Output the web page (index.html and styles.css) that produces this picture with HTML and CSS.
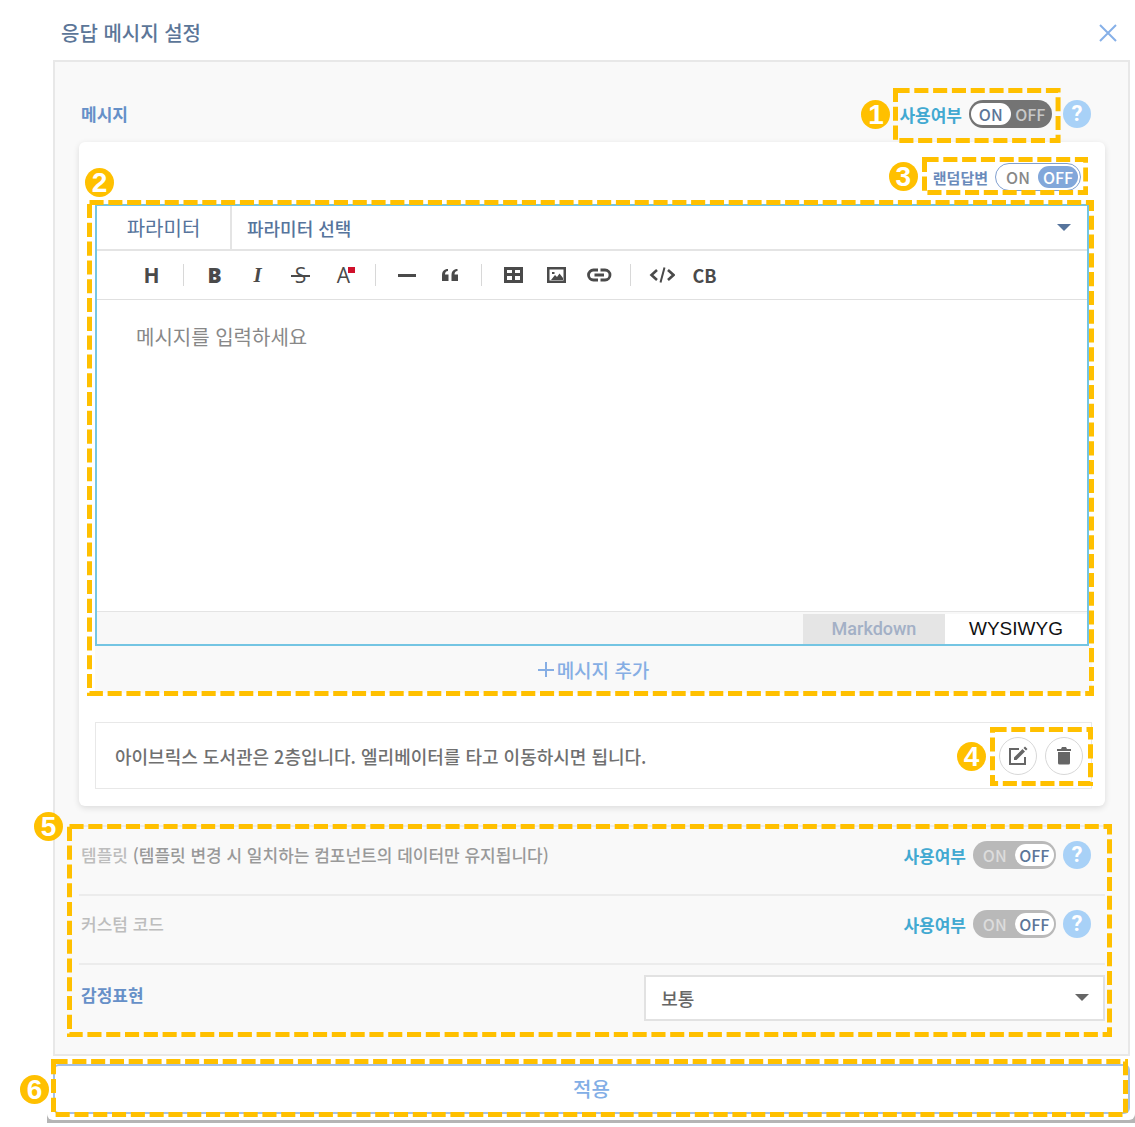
FILE: index.html
```html
<!DOCTYPE html>
<html lang="ko">
<head>
<meta charset="utf-8">
<title>응답 메시지 설정</title>
<meta name="viewport" content="width=device-width, initial-scale=1">
<link rel="stylesheet" href="styles.css">
</head>
<body>
<div class="backdrop">
<main class="dialog">
  <header class="dialog-head">
    <h1>응답 메시지 설정</h1>
    <button class="close" type="button" aria-label="닫기">
      <svg width="18" height="18" viewBox="0 0 18 18"><path d="M1 1l16 16M17 1L1 17" fill="none" stroke="currentColor" stroke-width="2"/></svg>
    </button>
  </header>

  <div class="panel">
    <section class="section-head">
      <h2>메시지</h2>
      <div class="controls wide">
        <div class="anchor">
          <label class="switch dark"><span class="switch-name">사용여부</span><input type="checkbox" checked><span class="track"><span class="on">ON</span><span class="off">OFF</span></span></label>
          <div class="mark mark-1"><svg><rect/></svg><b class="badge">1</b></div>
        </div>
        <button class="help" type="button">?</button>
      </div>
    </section>

    <section class="card">
      <div class="random-row">
        <div class="anchor">
          <label class="switch blue"><span class="switch-name">랜덤답변</span><input type="checkbox"><span class="track"><span class="on">ON</span><span class="off">OFF</span></span></label>
          <div class="mark mark-3"><svg><rect/></svg><b class="badge">3</b></div>
        </div>
      </div>

      <div class="anchor">
        <div class="editor">
          <div class="param-row">
            <label class="param-name" for="param">파라미터</label>
            <div class="select navy">
              <select id="param"><option>파라미터 선택</option></select>
            </div>
          </div>
          <div class="toolbar">
            <button type="button" class="t-bold">H</button>
            <span class="sep"></span>
            <button type="button" class="t-black">B</button>
            <button type="button" class="t-italic">I</button>
            <button type="button" class="t-strike">S</button>
            <button type="button" class="t-color">A</button>
            <span class="sep"></span>
            <button type="button" aria-label="구분선"><svg width="20" height="20" viewBox="0 0 20 20"><path d="M1 9h18v3H1z"/></svg></button>
            <button type="button" aria-label="인용"><svg width="18" height="20" viewBox="0 0 18 20"><path d="M7 4v2C5 6 4 7.500 4 9.500h3.500V16H1v-6C1 6.500 3 4 7 4zM16.500 4v2c-2 0-3 1.500-3 3.500H17V16h-6.500v-6c0-3.500 2-6 6-6z"/></svg></button>
            <span class="sep"></span>
            <button type="button" aria-label="표"><svg width="20" height="20" viewBox="0 0 20 20"><path fill-rule="evenodd" d="M1 2h19v16H1zM4 5v3h5V5zM12 5v3h5V5zM4 11v4h5v-4zM12 11v4h5v-4z"/></svg></button>
            <button type="button" aria-label="이미지"><svg width="20" height="20" viewBox="0 0 20 20"><path fill-rule="evenodd" d="M1 2h19v16H1zM3.500 4.500v11h14v-11zM5 15l4-5 2 2 2.500-3.500L17 13v2zM6 7h2.500v2H6z"/></svg></button>
            <button type="button" aria-label="링크"><svg width="26" height="20" viewBox="0 0 26 20"><path d="M12 5H7.500a5 5 0 0 0 0 10H12M14.500 5H19a5 5 0 0 1 0 10h-4.500M8.500 10H18" fill="none" stroke="currentColor" stroke-width="2.800"/></svg></button>
            <span class="sep"></span>
            <button type="button" aria-label="코드"><svg width="26" height="20" viewBox="0 0 26 20"><path d="M8 5l-5.500 5L8 15M19 5l5.500 5-5.500 5" fill="none" stroke="currentColor" stroke-width="2.600"/><path d="M15.500 2.500l-4 15" stroke="currentColor" stroke-width="2"/></svg></button>
            <button type="button" class="t-cb">CB</button>
          </div>
          <textarea aria-label="메시지" placeholder="메시지를 입력하세요"></textarea>
          <div class="modes">
            <button type="button" class="mode-md">Markdown</button>
            <button type="button" class="mode-wy">WYSIWYG</button>
          </div>
        </div>
        <button class="add" type="button">
          <svg width="16" height="16" viewBox="0 0 16 16"><path d="M8 0v15M0 8h16" fill="none" stroke="currentColor" stroke-width="2"/></svg>메시지 추가
        </button>
        <div class="mark mark-2"><svg><rect/></svg><b class="badge">2</b></div>
      </div>

      <div class="item">
        <p>아이브릭스 도서관은 2층입니다. 엘리베이터를 타고 이동하시면 됩니다.</p>
        <div class="anchor item-actions">
          <button class="round" type="button" aria-label="수정"><svg width="20" height="20" viewBox="0 0 20 20"><path d="M11 3H2v15h15v-7" fill="none" stroke="currentColor" stroke-width="2"/><path d="M6 11.500L14.500 3l2.500 2.500L8.500 14H6zM15.500 2L17 .5 19.500 3 18 4.500z"/></svg></button>
          <button class="round" type="button" aria-label="삭제"><svg width="20" height="20" viewBox="0 0 20 20"><path d="M3 3h4l1-2h4l1 2h4v2H3zM4 6h12v11a1.500 1.500 0 0 1-1.500 1.500h-9A1.500 1.500 0 0 1 4 17z"/></svg></button>
          <div class="mark mark-4"><svg><rect/></svg><b class="badge">4</b></div>
        </div>
      </div>
    </section>

    <div class="anchor rows">
      <section class="row">
        <h2 class="off-title">템플릿 <span>(템플릿 변경 시 일치하는 컴포넌트의 데이터만 유지됩니다)</span></h2>
        <div class="controls">
          <label class="switch gray"><span class="switch-name">사용여부</span><input type="checkbox"><span class="track"><span class="on">ON</span><span class="off">OFF</span></span></label>
          <button class="help" type="button">?</button>
        </div>
      </section>
      <section class="row">
        <h2 class="off-title">커스텀 코드</h2>
        <div class="controls">
          <label class="switch gray"><span class="switch-name">사용여부</span><input type="checkbox"><span class="track"><span class="on">ON</span><span class="off">OFF</span></span></label>
          <button class="help" type="button">?</button>
        </div>
      </section>
      <section class="row emotion">
        <h2><label for="emotion">감정표현</label></h2>
        <div class="select boxed">
          <select id="emotion"><option>보통</option></select>
        </div>
      </section>
      <div class="mark mark-5"><svg><rect/></svg><b class="badge">5</b></div>
    </div>
  </div>

  <footer class="anchor">
    <button class="apply" type="button">적용</button>
    <div class="mark mark-6"><svg><rect/></svg><b class="badge">6</b></div>
  </footer>
</main>
</div>
</body>
</html>
```
FILE: styles.css
```css
* { box-sizing: border-box; }

body {
  margin: 0;
  background: #fff;
  color: #666;
  font-family: "Noto Sans CJK KR", "Noto Sans", sans-serif;
  font-size: 17px;
  line-height: 28px;
}

h1, h2, p { margin: 0; }

button, select, textarea {
  margin: 0;
  padding: 0;
  border: 0;
  border-radius: 0;
  background: none;
  color: inherit;
  font: inherit;
}

svg { display: block; fill: currentColor; }

.backdrop {
  margin-left: 47px;
  padding-bottom: 3px;
  background: #b5b5b5;
}

.dialog {
  padding: 0 5px 6px 6px;
  border-radius: 0 0 6px 6px;
  background: #fff;
}

.dialog-head {
  display: flex;
  align-items: center;
  justify-content: space-between;
  height: 60px;
  padding: 6px 13px 0 8px;
}

h1 {
  color: #5c7698;
  font-size: 20px;
  font-weight: 500;
}

.close { color: #86b0e8; }

.panel {
  padding: 38px 23px 0 24px;
  border: 2px solid #e8e8e8;
  background: #f9f9f9;
}

h2 {
  color: #6690c8;
  font-size: 17px;
  font-weight: 700;
}

.section-head,
.row {
  display: flex;
  justify-content: space-between;
  padding: 0 14px 0 2px;
}

.section-head { margin-bottom: 14px; }

.controls {
  display: flex;
  align-items: flex-start;
  gap: 7px;
}

.controls.wide { gap: 11px; }

.help {
  width: 28px;
  height: 28px;
  border-radius: 50%;
  background: #a8d1f7;
  color: #fff;
  font-family: Roboto, sans-serif;
  font-size: 22px;
  font-weight: 700;
}

/* ON/OFF switches */
.switch {
  display: flex;
  align-items: flex-end;
  gap: 7px;
}

.switch input {
  position: absolute;
  opacity: 0;
}

.switch-name {
  color: #42a9d1;
  font-weight: 700;
  line-height: 26px;
}

.track {
  display: flex;
  align-items: center;
  width: 83px;
  height: 28px;
  padding: 0 2px;
  border-radius: 14px;
  font-size: 16px;
  font-weight: 500;
  line-height: 22px;
  text-align: center;
}

.on, .off {
  flex: 1;
  border-radius: 11px;
}

.dark .track { background: #747474; color: #c8c8c8; }
.dark .on { background: #fff; color: #5c7698; }
.gray .track { background: #b9b9b9; color: #dcdcdc; }
.gray .off { background: #fff; color: #5c7698; }
.blue .track { width: 86px; border: 1px solid #7f9fd0; background: #fff; color: #888; }
.blue .off { background: #82a7da; color: #fff; }
.blue .switch-name { color: #6a8bbb; font-size: 15px; }

.card {
  margin-bottom: 19px;
  padding: 21px 13px 17px 16px;
  border-radius: 6px;
  background: #fff;
  box-shadow: 0 2px 6px rgba(0, 0, 0, 0.12);
}

.random-row {
  display: flex;
  justify-content: flex-end;
  margin-bottom: 13px;
  padding-right: 11px;
}

/* Message editor */
.editor {
  margin-right: 3px;
  border: 2px solid #74c5e3;
  background: #fff;
}

.param-row {
  display: flex;
  height: 45px;
  border-bottom: 2px solid #e4e4e4;
  color: #56749c;
}

.param-name {
  width: 135px;
  border-right: 2px solid #e4e4e4;
  font-size: 20px;
  line-height: 43px;
  text-align: center;
}

.select {
  position: relative;
  flex: 1;
}

.select select {
  width: 100%;
  height: 100%;
  padding: 0 40px 0 15px;
  appearance: none;
  font-size: 18px;
  font-weight: 500;
}

.select::after {
  content: "";
  position: absolute;
  top: 50%;
  right: 16px;
  margin-top: -4px;
  border: 7px solid transparent;
  border-bottom-width: 0;
  border-top-color: currentColor;
  pointer-events: none;
}

.toolbar {
  display: flex;
  align-items: center;
  height: 49px;
  padding-left: 33px;
  border-bottom: 1px solid #e0e0e0;
  color: #4a4a4a;
}

.toolbar button {
  display: flex;
  align-items: center;
  justify-content: center;
  width: 43px;
  height: 32px;
  font-family: "Open Sans", sans-serif;
  font-size: 21px;
}

.toolbar .t-bold { font-weight: 700; }
.toolbar .t-black { font-weight: 800; }
.toolbar .t-italic { font-family: "Liberation Serif", serif; font-style: italic; font-weight: 700; }
.toolbar .t-cb { font-family: "Noto Sans CJK KR", sans-serif; font-weight: 700; font-size: 18px; }

.t-strike { position: relative; }

.t-strike::after {
  content: "";
  position: absolute;
  top: 50%;
  left: 12px;
  width: 19px;
  height: 2px;
  background: currentColor;
}

.t-color { position: relative; }

.t-color::after {
  content: "";
  position: absolute;
  top: 8px;
  right: 10px;
  width: 7px;
  height: 6px;
  background: #d0112b;
}

.sep {
  width: 1px;
  height: 22px;
  margin: 0 9px 0 10px;
  background: #d8d8d8;
}

textarea {
  display: block;
  width: 100%;
  height: 311px;
  padding: 23px 39px;
  resize: none;
  font-size: 20px;
}

textarea::placeholder { color: #888; }

.modes {
  display: flex;
  justify-content: flex-end;
  height: 33px;
  padding-top: 2px;
  border-top: 1px solid #e4e4e4;
  background: #f8f8f8;
}

.modes button { width: 142px; }

.modes .mode-md {
  background: #e5e5e5;
  color: #a3b0c6;
  font-family: Roboto, sans-serif;
  font-size: 18px;
  font-weight: 500;
}

.modes .mode-wy {
  background: #fff;
  color: #111;
  font-family: "Liberation Sans", sans-serif;
  font-size: 19px;
}

.add {
  display: flex;
  align-items: center;
  justify-content: center;
  gap: 3px;
  width: 100%;
  height: 47px;
  background: #f9f9f9;
  color: #86aee4;
  font-size: 19px;
  font-weight: 500;
}

.item {
  display: flex;
  align-items: center;
  justify-content: space-between;
  height: 67px;
  margin-top: 29px;
  padding: 0 8px 0 19px;
  border: 1px solid #e8e8e8;
  color: #707070;
  font-size: 18px;
  font-weight: 500;
}

.item-actions {
  display: flex;
  gap: 8px;
}

.round {
  display: flex;
  align-items: center;
  justify-content: center;
  width: 38px;
  height: 38px;
  border: 1px solid #d8d8d8;
  border-radius: 50%;
  color: #666;
}

/* Option rows under the card */
.row {
  height: 69px;
  padding-top: 14px;
  border-top: 2px solid #ececec;
}

.row .off-title { color: #bdbdbd; font-weight: 500; }
.off-title span { color: #999; }

.row.emotion {
  height: 91px;
  padding: 10px 0 0 2px;
}

.emotion h2 { padding-top: 6px; }

.select.boxed {
  flex: 0 0 45%;
  height: 46px;
  border: 2px solid #e2e2e2;
  background: #fff;
}

.boxed::after { right: 14px; }

.apply {
  display: block;
  width: 100%;
  height: 50px;
  border: 2px solid #a5c0e6;
  border-radius: 6px;
  background: #fff;
  color: #82aee6;
  font-size: 20px;
  font-weight: 500;
}

footer { margin-top: 8px; }

/* Numbered callouts laid over the controls they explain */
.anchor { position: relative; }

.mark {
  position: absolute;
  pointer-events: none;
}

.mark svg {
  width: 100%;
  height: 100%;
}

.mark rect {
  x: 2.5px;
  y: 2.5px;
  width: calc(100% - 5px);
  height: calc(100% - 5px);
  fill: none;
  stroke: #ffc000;
  stroke-width: 5px;
  stroke-dasharray: 14.1 4.7;
}

.mark-1 { inset: -12px -9px -15px -6px; }
.mark-2 { inset: -4px -2px -3px -8px; }
.mark-3 { inset: -6px -7px -4px -11px; }
.mark-4 { inset: -10px -10px -11px -9px; }
.mark-5 { inset: -1px -7px 17px -12px; }
.mark-6 { inset: -5px 2px -3px -2px; }

.badge {
  position: absolute;
  width: 29px;
  height: 29px;
  border-radius: 50%;
  background: #ffc000;
  color: #fff;
  font-family: "Liberation Sans", sans-serif;
  font-size: 28px;
  line-height: 29px;
  text-align: center;
}

.mark-1 .badge { top: 12px; left: -32px; }
.mark-2 .badge { top: -32px; left: -2px; }
.mark-3 .badge { top: 5px; left: -33px; }
.mark-4 .badge { top: 15px; left: -33px; }
.mark-5 .badge { top: -12px; left: -33px; }
.mark-6 .badge { top: 16px; left: -31px; }
```
